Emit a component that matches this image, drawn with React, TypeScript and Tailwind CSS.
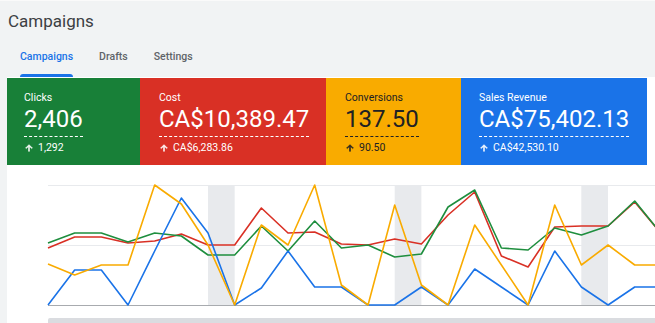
const xs = Array.from({ length: 24 }, (_, i) => 48 + i * 26.67);

const series = [
    {
        color: '#d93025',
        ys: [248, 237, 237, 243, 241, 234, 245, 245, 208, 233, 232, 244, 245, 239, 244, 215, 192, 256, 267, 227, 226, 226, 202, 234],
    },
    {
        color: '#1e8e3e',
        ys: [243, 233, 233, 242, 233, 236, 255, 255, 226, 251, 221, 248, 245, 257, 254, 207, 190, 248, 250, 228, 235, 226, 201, 234],
    },
    {
        color: '#1a73e8',
        ys: [305, 270, 270, 305, 251, 198, 233, 305, 288, 251, 287, 287, 305, 305, 287, 305, 269, 287, 305, 251, 287, 305, 287, 287],
    },
    {
        color: '#f9ab00',
        ys: [264, 275, 265, 265, 185, 204, 245, 305, 225, 245, 185, 285, 305, 205, 285, 305, 225, 265, 305, 205, 265, 245, 265, 265],
    },
];

const cards = [
    { label: 'Clicks', value: '2,406', delta: '1,292', bg: 'bg-[#188038] text-white border-white', width: 'w-[133px] pl-[17px]' },
    { label: 'Cost', value: 'CA$10,389.47', delta: 'CA$6,283.86', bg: 'bg-[#d93025] text-white border-white', width: 'w-[186px] pl-[19px]' },
    { label: 'Conversions', value: '137.50', delta: '90.50', bg: 'bg-[#f9ab00] text-[#202124] border-[#202124]', width: 'w-[135px] pl-[19px]' },
    { label: 'Sales Revenue', value: 'CA$75,402.13', delta: 'CA$42,530.10', bg: 'bg-[#1a73e8] text-white border-white', width: 'w-[186px] pl-[18px]' },
];

function ArrowUp() {
    return (
        <svg viewBox="0 0 24 24" className="h-[10px] w-[10px]" fill="currentColor">
            <path d="M4 12l1.41 1.41L11 7.83V20h2V7.83l5.58 5.59L20 12l-8-8-8 8z" stroke="currentColor" strokeWidth={1.5} />
        </svg>
    );
}

function Chart() {
    return (
        <svg viewBox="7 165 648 158" className="block h-[158px] w-[648px]">
            {[208, 394.7, 581.3].map((x) => (
                <rect key={x} x={x} y={185} width={26.67} height={120} fill="#e8eaed" />
            ))}
            <line x1={48} x2={655} y1={185.5} y2={185.5} stroke="#e8eaed" />
            <line x1={48} x2={655} y1={245.5} y2={245.5} stroke="#e8eaed" />
            <line x1={48} x2={655} y1={305.5} y2={305.5} stroke="#a8abaf" />
            {series.map((s) => (
                <polyline
                    key={s.color}
                    points={s.ys.map((y, i) => `${xs[i]},${y}`).join(' ')}
                    fill="none"
                    stroke={s.color}
                    strokeWidth={1.6}
                    strokeLinejoin="round"
                />
            ))}
            <rect x={48} y={318} width={620} height={8} rx={2} fill="#dadce0" />
        </svg>
    );
}

export default function App() {
    return (
        <div className="h-[323px] w-[655px] overflow-hidden bg-[#f1f3f4] font-['Roboto',sans-serif]">
            <div className="h-[2px] border-t border-[#fafafa]" />
            <h1 className="ml-[8px] mt-[7px] text-[17px] font-normal leading-[24px] text-[#3c4043]">
                Campaigns
            </h1>
            <nav className="ml-[20px] mt-[17px] flex gap-[26px] text-[10.5px] font-medium leading-[14px]">
                <div className="flex flex-col">
                    <span className="text-[#1a73e8]">Campaigns</span>
                    <span className="mt-[10px] h-[3px] rounded-t-[3px] bg-[#1a73e8]" />
                </div>
                <span className="text-[#5f6368]">Drafts</span>
                <span className="text-[#5f6368]">Settings</span>
            </nav>

            <div className="flex">
                <div className="w-[7px] shrink-0" />
                <div className="flex-1 bg-white pt-[1px]">
                    <div className="flex">
                        {cards.map((card) => (
                            <div
                                key={card.label}
                                className={`${card.bg} ${card.width} h-[87px] shrink-0 pt-[13px]`}
                            >
                                <div className="text-[10.5px] leading-[14px]">{card.label}</div>
                                <div>
                                    <span className="inline-block border-b border-dashed border-inherit pb-[3px] text-[24px] leading-[28px]">
                                        {card.value}
                                    </span>
                                </div>
                                <div className="mt-[4px] flex items-center gap-[4px] text-[10.5px] leading-[14px]">
                                    <ArrowUp />
                                    <span>{card.delta}</span>
                                </div>
                            </div>
                        ))}
                    </div>
                    <Chart />
                </div>
            </div>
        </div>
    );
}
